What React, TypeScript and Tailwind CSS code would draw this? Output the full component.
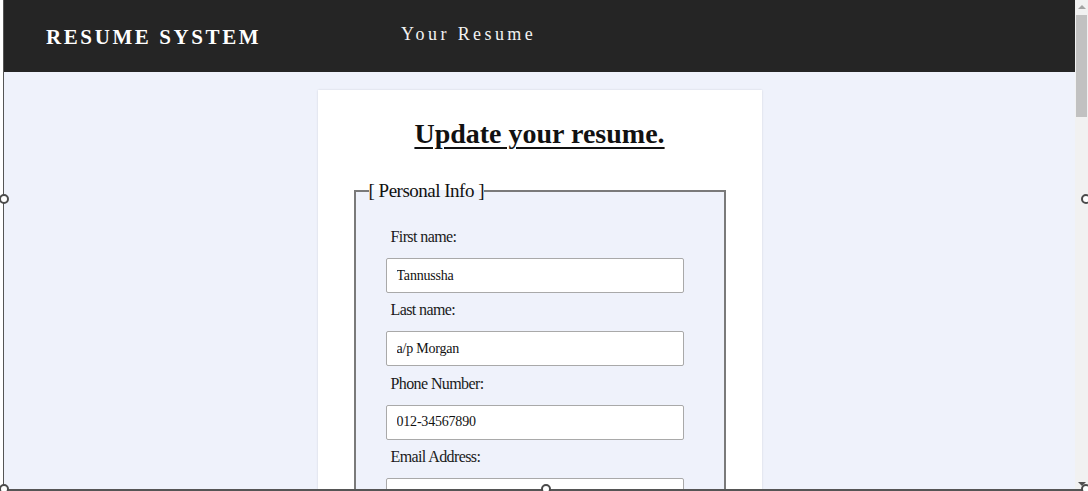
import React from 'react';

const serif = "font-['Liberation_Serif','Times_New_Roman',serif]";

function Field({ label, value }: { label: string; value: string }) {
  return (
    <div className="flex flex-col">
      <label className="ml-[5px] h-[18px] text-[16px] leading-[18px] tracking-[-0.6px] text-[#1a1a1a]">{label}</label>
      <input
        readOnly
        defaultValue={value}
        className={`mt-[12px] mb-[8.4px] h-[35px] w-[298px] shrink-0 rounded-[2px] border border-[#a9a9a9] bg-white pl-[10px] text-[14px] tracking-[-0.2px] text-[#111] outline-none ${serif}`}
      />
    </div>
  );
}

function Handle({ className }: { className: string }) {
  return (
    <div
      className={`absolute h-[10px] w-[10px] rounded-full border-2 border-[#4a4a4a] bg-white ${className}`}
    />
  );
}

export default function App() {
  return (
    <div className={`relative h-[491px] w-[1088px] overflow-hidden bg-white pl-[3px] ${serif}`}>
      <div className="flex h-[491px] overflow-hidden border-b-2 border-l border-[#555]">
        {/* page */}
        <div className="flex-1 overflow-hidden bg-[#eff2fb]">
          <header className="flex h-[72px] bg-[#252525] text-white">
            <div className="w-[397px] shrink-0 pl-[42px] pt-[22px] text-[21px] font-bold tracking-[2.6px]">
              RESUME SYSTEM
            </div>
            <div className="pt-[21px] text-[18px] tracking-[3.4px] text-[#f2f2f2]">Your Resume</div>
          </header>

          <main className="mx-auto mt-[18px] h-[420px] w-[444px] bg-white pt-[28px] shadow-[0_0_2px_rgba(0,0,0,0.12)]">
            <h1 className="text-center text-[28px] leading-[32px] font-bold text-[#111] underline decoration-[2px] underline-offset-[4px]">
              Update your resume.
            </h1>

            <fieldset className="mx-[36px] mt-[30px] border-2 border-[#7a7a7a] bg-[#eff2fb] pl-[13px]">
              <legend className="text-[19px] leading-[22px] tracking-[-0.5px] text-[#111]">[ Personal Info ]</legend>
              <div className="ml-[17px] pt-[26px]">
                <Field label="First name:" value="Tannussha" />
                <Field label="Last name:" value="a/p Morgan" />
                <Field label="Phone Number:" value="012-34567890" />
                <Field label="Email Address:" value="" />
              </div>
            </fieldset>
          </main>
        </div>

        {/* scrollbar */}
        <div className="flex w-[13px] shrink-0 flex-col items-center bg-[#f1f1f1]">
          <div className="mt-[5px] h-0 w-0 border-x-[4px] border-b-[4px] border-x-transparent border-b-[#a3a3a3]" />
          <div className="mt-[6px] h-[102px] w-[11px] bg-[#c1c1c1]" />
          <div className="flex-1" />
          <div className="mb-[3px] h-0 w-0 border-x-[4px] border-t-[4px] border-x-transparent border-t-[#505050]" />
        </div>
      </div>

      <Handle className="-left-[1px] top-[194px]" />
      <Handle className="left-[1081px] top-[194px]" />
      <Handle className="left-[541px] top-[484px]" />
      <Handle className="-left-[1px] top-[484px]" />
      <Handle className="left-[1081px] top-[484px]" />
    </div>
  );
}
